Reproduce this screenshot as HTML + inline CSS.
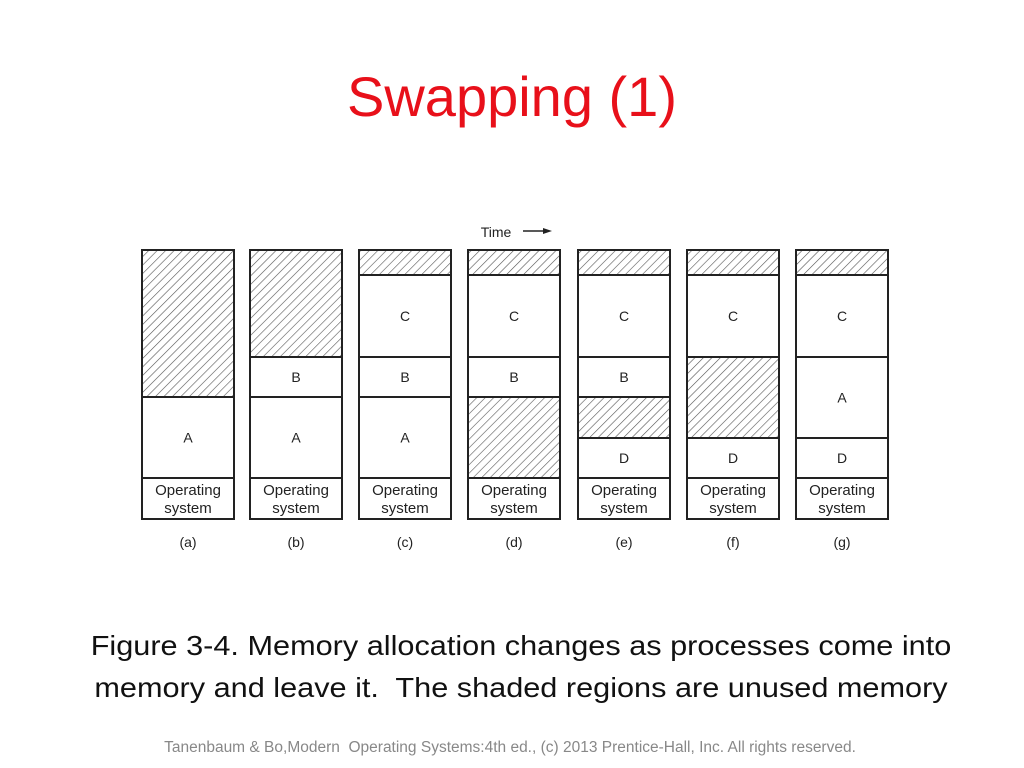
<!DOCTYPE html>
<html><head><meta charset="utf-8"><style>
body{margin:0;width:1024px;height:768px;background:#fff;position:relative;overflow:hidden;font-family:"Liberation Sans",sans-serif}
.t{position:absolute;left:0;width:1024px;text-align:center}
</style></head><body>
<div class="t" style="top:64px;font-size:56px;color:#e8101a">Swapping (1)</div>
<svg style="position:absolute;left:0;top:0" width="1024" height="768">
<defs><pattern id="h" width="6" height="6" patternUnits="userSpaceOnUse" patternTransform="rotate(45)"><line x1="0" y1="0" x2="0" y2="6" stroke="#555" stroke-width="1.2"/></pattern></defs>
<g font-family="Liberation Sans,sans-serif" font-size="14" text-anchor="middle" fill="#222">
<text x="496" y="237" font-size="14">Time</text>
<line x1="523" y1="231" x2="545" y2="231" stroke="#222" stroke-width="1.5"/><path d="M543 228 L552 231 L543 234Z" fill="#222"/>
</g>
<g id="cols" stroke="#222" stroke-width="2" font-family="Liberation Sans,sans-serif" font-size="14" text-anchor="middle"></g>
</svg>
<div class="t" style="top:625px;font-size:28px;color:#111;line-height:42px;left:9px;transform:scaleX(1.095)">Figure 3-4. Memory allocation changes as processes come into<br>memory and leave it.&nbsp; The shaded regions are unused memory</div>
<div class="t" style="top:739px;font-size:15.5px;color:#888;left:-2px">Tanenbaum &amp; Bo,Modern&nbsp; Operating Systems:4th ed., (c) 2013 Prentice-Hall, Inc. All rights reserved.</div>
<script>
var xs=[142,250,359,468,578,687,796],w=92;
var cfg=[
[[250,397,'s'],[397,478,'A']],
[[250,357,'s'],[357,397,'B'],[397,478,'A']],
[[250,275,'s'],[275,357,'C'],[357,397,'B'],[397,478,'A']],
[[250,275,'s'],[275,357,'C'],[357,397,'B'],[397,478,'s']],
[[250,275,'s'],[275,357,'C'],[357,397,'B'],[397,438,'s'],[438,478,'D']],
[[250,275,'s'],[275,357,'C'],[357,438,'s'],[438,478,'D']],
[[250,275,'s'],[275,357,'C'],[357,438,'A'],[438,478,'D']]];
var s='',L='abcdefg';
cfg.forEach(function(c,i){var x=xs[i];
c.forEach(function(r){s+='<rect x="'+x+'" y="'+r[0]+'" width="'+w+'" height="'+(r[1]-r[0])+'" fill="'+(r[2]=='s'?'url(#h)':'#fff')+'"/>';
if(r[2]!='s')s+='<text stroke="none" fill="#222" x="'+(x+w/2)+'" y="'+((r[0]+r[1])/2+5)+'">'+r[2]+'</text>';});
s+='<rect x="'+x+'" y="478" width="'+w+'" height="41" fill="#fff"/>';
s+='<text stroke="none" fill="#222" font-size="15" x="'+(x+w/2)+'" y="495">Operating</text>';
s+='<text stroke="none" fill="#222" font-size="15" x="'+(x+w/2)+'" y="513">system</text>';
s+='<text stroke="none" fill="#222" font-size="14" x="'+(x+w/2)+'" y="547">('+L[i]+')</text>';
});
document.getElementById('cols').innerHTML=s;
</script>
</body></html>
